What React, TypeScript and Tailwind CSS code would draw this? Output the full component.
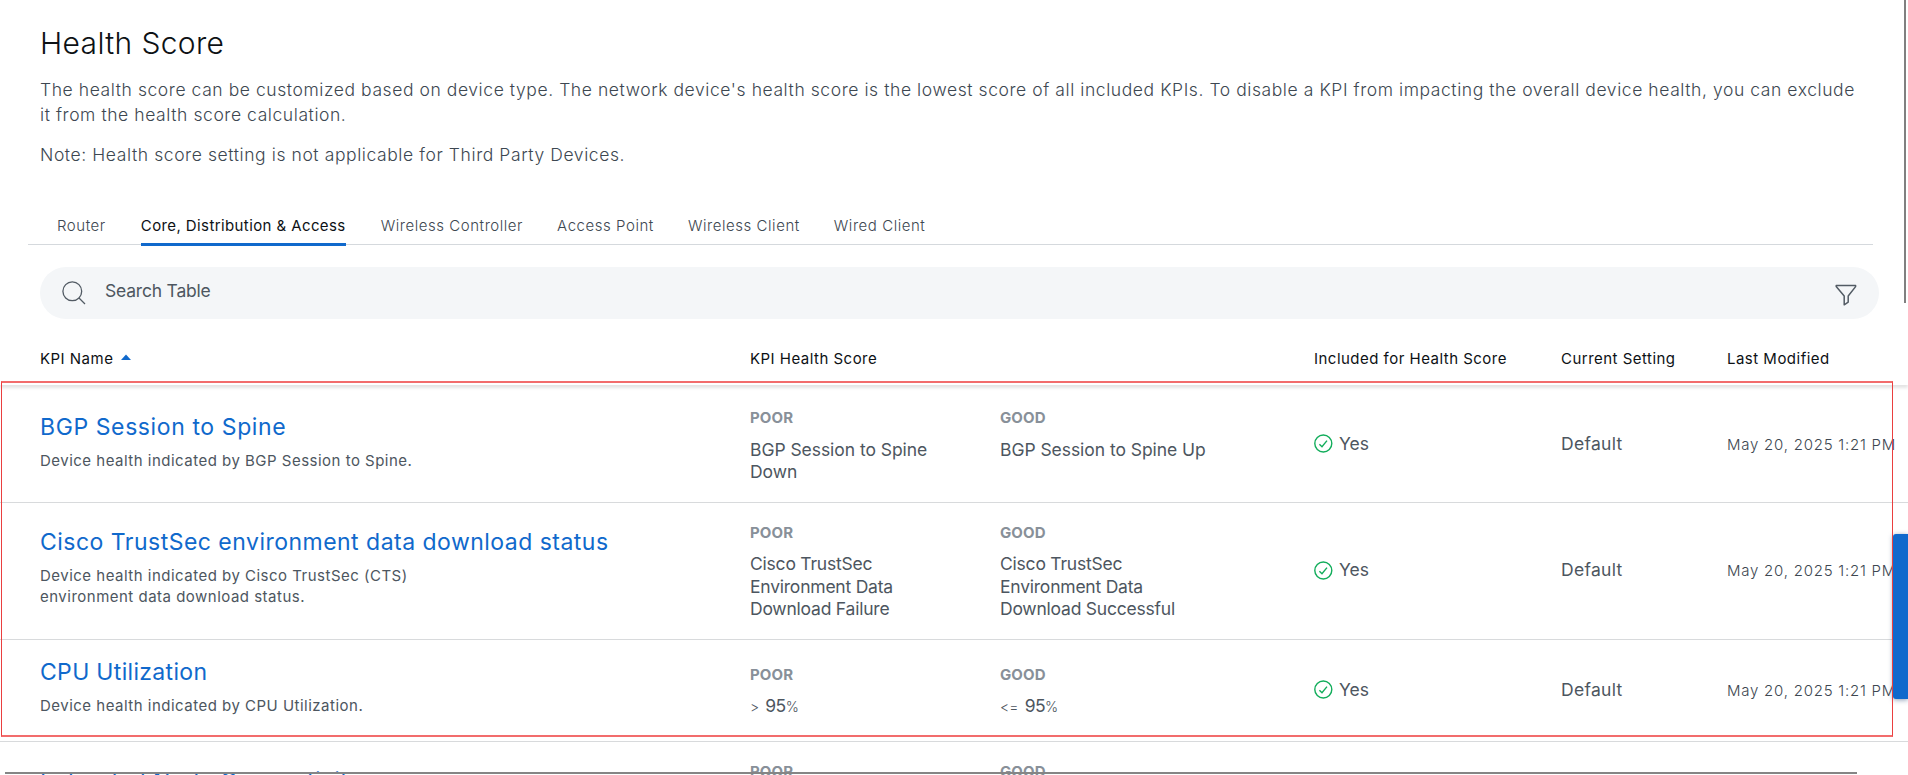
import type { ReactNode } from "react";

const tabs = ["Router", "Core, Distribution & Access", "Wireless Controller", "Access Point", "Wireless Client", "Wired Client"];
const tabMargins = ["ml-[29px]", "ml-[35px]", "ml-[35px]", "ml-[34px]", "ml-[34px]", "ml-[34px]"];

type Row = {
  name: string;
  description: string;
  poor: ReactNode;
  good: ReactNode;
  height: string;
  namePad: string;
  nameTracking: string;
  scorePad: string;
  scoreGap: string;
  settingPad: string;
};

function Threshold({ op, value }: { op: string; value: string }) {
  return (
    <span className="flex items-baseline">
      <span className="mr-[6px] text-[14px] font-light tracking-[0.2px]">{op}</span>
      <span className="tracking-[-0.6px]">{value}</span>
      <span className="text-[14px] font-light">%</span>
    </span>
  );
}

const rows: Row[] = [
  {
    name: "BGP Session to Spine",
    description: "Device health indicated by BGP Session to Spine.",
    poor: "BGP Session to Spine Down",
    good: "BGP Session to Spine Up",
    height: "h-[118px]",
    namePad: "pt-[28px]",
    nameTracking: "tracking-[0.6px]",
    scorePad: "pt-[23px]",
    scoreGap: "mt-[11px] leading-[22px] tracking-[-0.05px]",
    settingPad: "pb-0",
  },
  {
    name: "Cisco TrustSec environment data download status",
    description: "Device health indicated by Cisco TrustSec (CTS) environment data download status.",
    poor: "Cisco TrustSec Environment Data Download Failure",
    good: "Cisco TrustSec Environment Data Download Successful",
    height: "h-[137px]",
    namePad: "pt-[25px]",
    nameTracking: "tracking-[0.48px]",
    scorePad: "pt-[20px]",
    scoreGap: "mt-[10px] leading-[22.5px] tracking-[-0.22px]",
    settingPad: "pb-[2px]",
  },
  {
    name: "CPU Utilization",
    description: "Device health indicated by CPU Utilization.",
    poor: <Threshold op=">" value="95" />,
    good: <Threshold op="<=" value="95" />,
    height: "h-[102px]",
    namePad: "pt-[18px]",
    nameTracking: "tracking-[0.32px]",
    scorePad: "pt-[25px]",
    scoreGap: "mt-[10px] leading-[22.5px]",
    settingPad: "pb-[2px]",
  },
  {
    name: "Extended Node Connectivity",
    description: "",
    poor: "",
    good: "",
    height: "h-[118px]",
    namePad: "pt-[25px]",
    nameTracking: "tracking-[0.42px]",
    scorePad: "pt-[20px]",
    scoreGap: "mt-[10px] leading-[22.5px]",
    settingPad: "pb-0",
  },
];

function Score({ label, gap, children }: { label: string; gap: string; children: ReactNode }) {
  return (
    <div>
      <div className="text-[15px] leading-5 font-bold tracking-[0.1px] text-[#889099]">{label}</div>
      <div className={`w-[215px] text-[17.5px] ${gap}`}>{children}</div>
    </div>
  );
}

function CheckIcon() {
  return (
    <svg width="19" height="19" viewBox="0 0 19 19" fill="none" stroke="#12ad5b" strokeWidth="1.4" className="shrink-0">
      <circle cx="9.3" cy="9.5" r="8.5" />
      <path d="M5.4 10.2l2.6 2.6 5-6.2" />
    </svg>
  );
}

const columns = "grid grid-cols-[710px_564px_247px_166px_1fr] pl-10";

export default function App() {
  return (
    <div className="relative h-[775px] w-[1908px] overflow-hidden bg-white font-['Inter','Liberation_Sans',sans-serif] text-[#4d5660]">
      <header className="px-10 pt-[25px]">
        <h1 className="text-[30px] leading-9 font-light tracking-[0.35px] text-[#0d1115]">Health Score</h1>
        <p className="mt-4 text-[17.5px] leading-[25px] font-light tracking-[0.575px] text-[#3d4751]">
          The health score can be customized based on device type. The network device's health score is the lowest score of all included KPIs. To disable a KPI from impacting the overall device health, you can exclude it from the health score calculation.
        </p>
        <p className="mt-[15px] text-[17.5px] leading-[25px] font-light tracking-[0.59px] text-[#3d4751]">
          Note: Health score setting is not applicable for Third Party Devices.
        </p>
      </header>

      <nav className="mt-12 mr-[35px] ml-[28px] flex h-[30px] border-b border-[#d5d9dd] whitespace-nowrap">
        {tabs.map((tab, i) => (
          <div
            key={tab}
            className={`h-[31px] shrink-0 border-b-[3px] text-[15px] leading-[21px] ${tabMargins[i]} ${
              i === 1 ? "border-[#1069cc] tracking-[0.4px] text-[#0d1115]" : "border-transparent font-light tracking-[0.55px] text-[#3d4751]"
            }`}
          >
            {tab}
          </div>
        ))}
      </nav>

      <div className="mt-[22px] mr-[29px] ml-10 flex h-[52px] items-center rounded-[26px] bg-[#f4f6f8] pr-[22px] pl-[22px]">
        <svg width="24" height="24" viewBox="0 0 24 24" fill="none" stroke="#525b64" strokeWidth="1.3">
          <circle cx="10.3" cy="10.3" r="9.4" />
          <path d="M17 17l6 6" />
        </svg>
        <span className="mb-1 ml-[19px] text-[17.5px] tracking-[-0.2px]">Search Table</span>
        <svg width="22" height="22" viewBox="0 0 22 22" fill="none" stroke="#525b64" strokeWidth="1.5" strokeLinejoin="round" className="mt-1 ml-auto">
          <path d="M1.2 1.6h19.4v1L13.2 12v6.2L9.2 20.8V12L1.2 2.6z" />
        </svg>
      </div>

      <div className={`${columns} h-[66px] bg-white pt-[30px] text-[15px] leading-5 tracking-[0.48px] text-[#0d1115] shadow-[0_3px_3px_rgba(0,0,0,0.11)]`}>
        <div className="flex">
          KPI Name
          <svg width="10" height="6" viewBox="0 0 10 6" fill="#1069cc" className="mt-[5px] ml-[8px]">
            <path d="M0 6L5 0.4L10 6z" />
          </svg>
        </div>
        <div>KPI Health Score</div>
        <div>Included for Health Score</div>
        <div>Current Setting</div>
        <div>Last Modified</div>
      </div>

      {rows.map((row) => (
        <div key={row.name} className={`${columns} ${row.height} border-b border-[#d8dadc]`}>
          <div className={row.namePad}>
            <div className={`text-[23px] leading-7 text-[#1069cc] ${row.nameTracking}`}>{row.name}</div>
            <div className="mt-[9px] w-[400px] text-[15px] leading-[21px] tracking-[0.49px]">{row.description}</div>
          </div>
          <div className={`grid grid-cols-[250px_1fr] ${row.scorePad}`}>
            <Score label="POOR" gap={row.scoreGap}>{row.poor}</Score>
            <Score label="GOOD" gap={row.scoreGap}>{row.good}</Score>
          </div>
          {row.description && (
            <>
              <div className={`flex items-center gap-[6px] text-[17.5px] leading-[22px] ${row.settingPad}`}>
                <CheckIcon />
                Yes
              </div>
              <div className={`flex items-center text-[17.5px] leading-[22px] tracking-[0.3px] ${row.settingPad}`}>Default</div>
              <div className={`flex items-center text-[15px] leading-[22px] font-light tracking-[0.76px] whitespace-nowrap text-[#3d4751] ${row.settingPad}`}>
                <span className="pt-0.5">May 20, 2025 1:21 PM</span>
              </div>
            </>
          )}
        </div>
      ))}

      <div className="absolute top-[534px] right-0 h-[165px] w-[15px] rounded-l-[3px] bg-[#1069cc] shadow-[0_1px_5px_rgba(30,60,110,0.5)]" />
      <div className="absolute top-[381px] left-px h-[356px] w-[1892px] border-x border-y-2 border-x-[#ea3f3f] border-y-[#f26c6c]" />
      <div className="absolute top-0 right-[2px] h-[303px] w-[2px] bg-[#808080]" />
      <div className="absolute top-[772px] left-[5px] h-[2px] w-[1852px] bg-[#858585]" />
    </div>
  );
}
